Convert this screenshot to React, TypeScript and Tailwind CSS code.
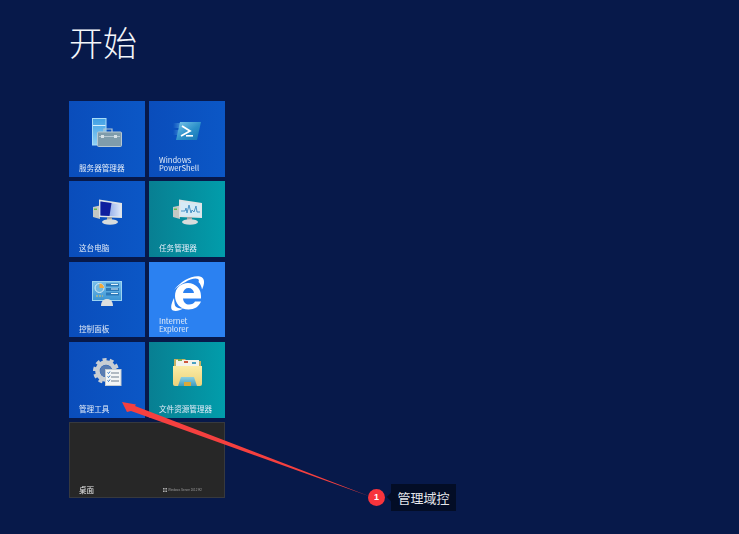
import React from 'react';

const cjk = '"Noto Sans CJK SC", "Liberation Sans", sans-serif';
const blue = 'bg-linear-to-r from-[#0a4dbb] to-[#0b57c6]';
const teal = 'bg-linear-to-r from-[#087f92] to-[#019dab]';

const ServerIcon = () => (
  <svg width="30" height="29" viewBox="0 0 30 29">
    <defs>
      <linearGradient id="tower" x1="0" y1="0" x2="0" y2="1">
        <stop offset="0" stopColor="#3f9fe4" />
        <stop offset="1" stopColor="#8fd0f4" />
      </linearGradient>
    </defs>
    <rect x="0.5" y="0.5" width="13.5" height="26.5" fill="url(#tower)" stroke="#a9dcf8" />
    <rect x="1" y="7" width="12.5" height="1" fill="#d9f0fc" />
    <rect x="5.5" y="14" width="24" height="14.5" rx="1" fill="#7f9cab" stroke="#b6c8d2" />
    <path d="M12 14v-3h8v3" fill="none" stroke="#b6c8d2" strokeWidth="1.2" />
    <rect x="7" y="18" width="21" height="1" fill="#b6c8d2" />
    <rect x="9" y="17" width="3" height="3" fill="#d7e1e6" />
    <rect x="22" y="17" width="3" height="3" fill="#d7e1e6" />
  </svg>
);

const PowerShellIcon = () => (
  <svg width="28" height="20" viewBox="0 0 28 20">
    <defs>
      <linearGradient id="ps" x1="0" y1="0" x2="1" y2="1">
        <stop offset="0" stopColor="#7cc6ea" />
        <stop offset="0.55" stopColor="#2a8fc9" />
        <stop offset="1" stopColor="#1673b4" />
      </linearGradient>
      <linearGradient id="psfade" x1="0" y1="0" x2="1" y2="0">
        <stop offset="0" stopColor="#5aa8e0" stopOpacity="0" />
        <stop offset="1" stopColor="#5aa8e0" stopOpacity="0.7" />
      </linearGradient>
    </defs>
    <path d="M0 2h8v5H0zM0 9h6v5H0z" fill="url(#psfade)" />
    <path d="M7 1h21l-4 18H3z" fill="url(#ps)" />
    <path d="M9 5l8 5-9 5" fill="none" stroke="#ffffff" strokeWidth="1.8" />
    <rect x="13" y="14" width="7" height="1.6" fill="#ffffff" />
  </svg>
);

const MonitorIcon = ({ chart }: { chart?: boolean }) => (
  <svg width="29" height="26" viewBox="0 0 29 26">
    <defs>
      <linearGradient id="screen" x1="0" y1="0" x2="1" y2="0">
        <stop offset="0" stopColor="#5f86e0" />
        <stop offset="1" stopColor="#dbe6f8" />
      </linearGradient>
    </defs>
    <path d="M0 8l7-1.500V20l-7-2z" fill="#c4c8c4" />
    <rect x="1" y="9.5" width="3" height="1.5" fill="#66c04a" />
    <path d="M6 0.5l23 3.500v15L6 18z" fill="#dfe4e6" />
    <path d="M7.5 2.500l20 3v12l-20-1z" fill={chart ? '#d5eaf6' : 'url(#screen)'} />
    {chart ? (
      <path d="M8 12h4l1-3 1 5 2-8 2 8 1-3 2 2 2-6 1 6 3 0" fill="none" stroke="#4a93c6" strokeWidth="1" />
    ) : (
      <path d="M7.500 2.500l11 1.600-2 12.900-9-.5z" fill="#0f1f9e" />
    )}
    <rect x="14" y="18" width="5" height="3" fill="#a4aaaa" />
    <ellipse cx="17" cy="23" rx="8" ry="2.8" fill="#d8dcdc" />
  </svg>
);

const ControlPanelIcon = () => (
  <svg width="30" height="25" viewBox="0 0 30 25">
    <defs>
      <linearGradient id="panel" x1="0" y1="0" x2="0" y2="1">
        <stop offset="0" stopColor="#79c0ea" />
        <stop offset="1" stopColor="#3a94d4" />
      </linearGradient>
    </defs>
    <rect x="0.5" y="0.5" width="29" height="19" fill="url(#panel)" stroke="#9cd4f2" />
    <circle cx="7.5" cy="7" r="4.5" fill="#6fb8e0" stroke="#d8edf8" />
    <path d="M7.500 2.500A4.500 4.500 0 0 1 12 7H7.500z" fill="#f3a93c" />
    <rect x="14" y="2.5" width="13" height="3" fill="#2a78b8" />
    <rect x="14" y="7" width="13" height="3" fill="#2a78b8" />
    <rect x="14" y="11.5" width="13" height="3" fill="#2a78b8" />
    <path d="M19 3.500h7M19 8h7M19 12.500h7" stroke="#e2f2fb" strokeWidth="1" />
    <path d="M4 15h2M7 15h2M10 15h1" stroke="#e8c85a" strokeWidth="1.2" />
    <path d="M9 25c0-4.500 2.500-7 6-7s6 2.500 6 7z" fill="#dcdfdf" />
  </svg>
);

const IeIcon = () => (
  <svg width="35" height="35" viewBox="0 0 35 35">
    <path
      fillRule="evenodd"
      d="M18 7a13 13 0 0 1 13 13v2.500H13c.5 4 3 6 6 6 3 0 5-1 6-3h6c-2 5-6.500 8-12.500 8C10 33.500 5 27 5 20 5 12 11 7 18 7zM13 17h11c-.3-3-2.500-5-5.500-5-3 0-5 2-5.500 5z"
      fill="#ffffff"
    />
    <path
      d="M4 14C11 5 22-1 30 .5c5 1 5 7 2 13-.5-3-1.500-5.500-3.500-7.500 1-2 0-3.500-3-3.500-3 0-7 1.500-10 3.500C11 8 7 11 4 14z"
      fill="#ffffff"
    />
    <path d="M4 22C1 28 0 33 3 34.500c3 1 7 0 10-2-3 0-7-.5-8-3-.5-2-.8-5-1-7.500z" fill="#ffffff" />
  </svg>
);

const AdminToolsIcon = () => (
  <svg width="29" height="29" viewBox="0 0 29 29">
    <circle cx="13" cy="13" r="8.5" fill="none" stroke="#c9ced3" strokeWidth="4.5" />
    <circle cx="13" cy="13" r="11.5" fill="none" stroke="#c9ced3" strokeWidth="3" strokeDasharray="4 3.2" />
    <circle cx="13" cy="13" r="6" fill="#8e99a6" opacity="0.6" />
    <rect x="12.5" y="11.5" width="15.5" height="16" fill="#f4f6f6" stroke="#c4ccd2" />
    <path d="M18 15h8M18 19h8M18 23h8" stroke="#6f7f8e" strokeWidth="1.1" />
    <path d="M14.500 14.500l1 1 1.500-2M14.500 18.500l1 1 1.500-2M14.500 22.500l1 1 1.500-2" fill="none" stroke="#2a6fc0" strokeWidth="1" />
  </svg>
);

const FolderIcon = () => (
  <svg width="29" height="28" viewBox="0 0 29 28">
    <defs>
      <linearGradient id="folder" x1="0" y1="0" x2="0" y2="1">
        <stop offset="0" stopColor="#fbeca6" />
        <stop offset="1" stopColor="#ecd27a" />
      </linearGradient>
      <linearGradient id="glass" x1="0" y1="0" x2="0" y2="1">
        <stop offset="0" stopColor="#8cd0e0" />
        <stop offset="1" stopColor="#3f9cc0" />
      </linearGradient>
    </defs>
    <path d="M1 1h11l2 2h14v10H1z" fill="#c7b264" />
    <rect x="3" y="2" width="23" height="7" fill="#f3f3ea" />
    <rect x="5" y="1" width="4" height="2" fill="#7ab050" />
    <rect x="11" y="3" width="4" height="2" fill="#d0583c" />
    <rect x="19" y="4" width="4" height="2" fill="#4aa0c0" />
    <path d="M0 8h29v18a2 2 0 0 1-2 2H2a2 2 0 0 1-2-2z" fill="url(#folder)" />
    <path d="M8 19h13l3 9H5z" fill="url(#glass)" />
    <rect x="11" y="24" width="7" height="4" fill="#d9a93a" />
  </svg>
);

const tiles = [
  { label: '服务器管理器', icon: <ServerIcon />, bg: blue, top: 'pt-[17px]' },
  { label: 'Windows\nPowerShell', icon: <PowerShellIcon />, bg: blue, top: 'pt-[20px]' },
  { label: '这台电脑', icon: <MonitorIcon />, bg: blue, top: 'pt-[18px]' },
  { label: '任务管理器', icon: <MonitorIcon chart />, bg: teal, top: 'pt-[18px]' },
  { label: '控制面板', icon: <ControlPanelIcon />, bg: blue, top: 'pt-[19px]' },
  { label: 'Internet\nExplorer', icon: <IeIcon />, bg: 'bg-[#2b81f1]', top: 'pt-[14px]' },
  { label: '管理工具', icon: <AdminToolsIcon />, bg: blue, top: 'pt-[16px]' },
  { label: '文件资源管理器', icon: <FolderIcon />, bg: teal, top: 'pt-[16px]' },
];

const Tile = ({ label, icon, bg, top }: { label: string; icon: React.ReactNode; bg: string; top: string }) => (
  <div className={`flex flex-col h-[75.7px] ${bg}`}>
    <div className={`flex justify-center blur-[0.4px] ${top}`}>{icon}</div>
    <div
      className="mt-auto pl-[10px] pb-[4.500px] text-[7.6px] leading-[8px] text-[#e3ecf8] whitespace-pre blur-[0.2px]"
      style={{ fontFamily: cjk }}
    >
      {label}
    </div>
  </div>
);

export default function App() {
  return (
    <div className="relative w-[739px] h-[534px] overflow-hidden bg-[#07194a]">
      <div className="pl-[69px]">
        <h1
          className="h-[101px] pt-[19px] text-[34px] leading-[46px] font-light text-[#f4f6fa]"
          style={{ fontFamily: cjk }}
        >
          开始
        </h1>
        <div className="w-[156px] grid grid-cols-2 gap-x-[4px] gap-y-[4.6px]">
          {tiles.map((t) => (
            <Tile key={t.label} label={t.label} icon={t.icon} bg={t.bg} top={t.top} />
          ))}
          <div className="col-span-2 h-[75.7px] flex items-end justify-between pl-[9px] pr-[22px] pb-[2px] bg-[#272727] border border-[#37393e]">
            <span className="text-[7.6px] leading-[10px] text-[#e8e8e8] blur-[0.2px]" style={{ fontFamily: cjk }}>
              桌面
            </span>
            <div className="flex items-center gap-[1px] pb-[2px] opacity-80">
              <svg width="4" height="4" viewBox="0 0 5 5">
                <path d="M0 0h2v2H0zM3 0h2v2H3zM0 3h2v2H0zM3 3h2v2H3z" fill="#d0d0d0" />
              </svg>
              <span className="text-[3px] leading-[5px] text-[#b8b8b8] whitespace-nowrap" style={{ fontFamily: '"Liberation Sans", sans-serif' }}>
                Windows Server 2012 R2
              </span>
            </div>
          </div>
        </div>
      </div>

      {/* annotation over the tiles */}
      <svg className="absolute left-0 top-0" width="739" height="534" viewBox="0 0 739 534">
        <path d="M122 402L136 404.500L135 406L370 496.500L131 411L127 412Z" fill="#f5403f" />
      </svg>

      <div
        className="absolute left-[368px] top-[489px] flex items-center justify-center w-[17px] h-[17px] rounded-full bg-[#f7343c] text-white text-[9px] font-bold"
        style={{ fontFamily: '"Liberation Sans", sans-serif' }}
      >
        1
      </div>
      <div
        className="absolute left-[391px] top-[484px] h-[27px] w-[65px] flex items-center justify-center bg-[#030d26] text-[#e4e6ea] text-[13px]"
        style={{ fontFamily: cjk }}
      >
        <span className="absolute left-[-3px] top-[10px] w-[6px] h-[6px] rotate-45 bg-[#030d26]" />
        管理域控
      </div>
    </div>
  );
}
